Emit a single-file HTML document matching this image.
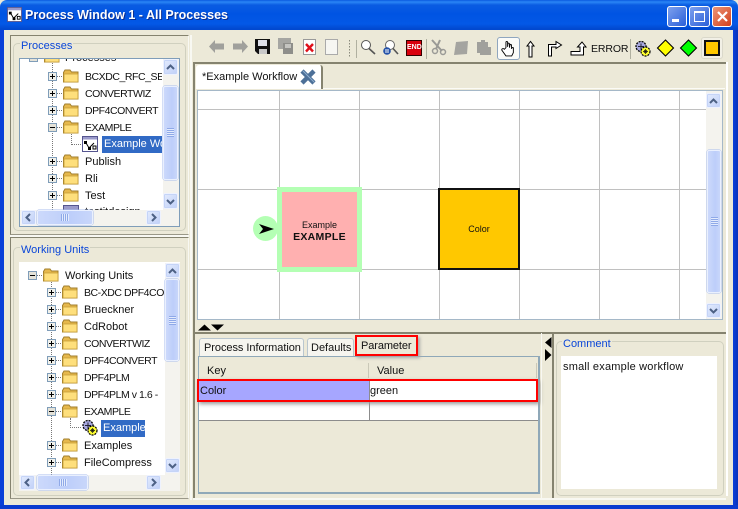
<!DOCTYPE html>
<html><head><meta charset="utf-8"><style>
html,body{margin:0;padding:0}
body{width:738px;height:509px;overflow:hidden;position:relative;background:#ece9d8;font:11px "Liberation Sans",sans-serif;color:#111}
div,svg{position:absolute;box-sizing:border-box}
svg,symbol{overflow:visible}
.t{white-space:nowrap;line-height:14px;margin-top:1px}
.u{font-size:10.5px;letter-spacing:-.45px}
.sbtn{background:linear-gradient(135deg,#e3ebfd,#c0d0f8);border:1px solid #eef2fe;border-radius:2px;box-shadow:inset 0 0 0 1px #c5d4f7}
.thumb{background:linear-gradient(90deg,#ccd9fb,#bdcefa 60%,#c8d6fa);border:1px solid #eaf0fe;border-radius:2px;box-shadow:0 0 0 .5px #a8bdec}
.track{background:#f4f3ee}
.grip{background:repeating-linear-gradient(#8fa9e8 0 1px,#e3ebfd 1px 2px)}
.gl{background:#c0c0c0}
.grp{border:1px solid #d0d0bf;border-radius:5px}
.lbl{color:#0a46d8;background:#ece9d8;padding:0 1px}
</style></head><body>
<svg width="0" height="0" style="position:absolute">
<defs>
<symbol id="f" viewBox="0 0 16 14"><path d="M.5 3.500 2 1H7L8.500 3H15V13H.5Z" fill="#e6b84c" stroke="#a07e2c" stroke-width="1"/><path d="M1 5H15V13H1Z" fill="#fedf7c" stroke="#c39a35" stroke-width=".8"/></symbol>
<symbol id="p" viewBox="0 0 9 9"><path d="M9 4.500H15" stroke="#777" stroke-dasharray="1 1"/><rect x=".5" y=".5" width="8" height="8" fill="#f0f0ea" stroke="#7f9db9"/><path d="M2 4.500H7M4.500 2V7" stroke="#000"/></symbol>
<symbol id="m" viewBox="0 0 9 9"><path d="M9 4.500H15" stroke="#777" stroke-dasharray="1 1"/><rect x=".5" y=".5" width="8" height="8" fill="#e4e2d8" stroke="#7f9db9"/><path d="M2 4.500H7" stroke="#000"/></symbol>
<symbol id="gear" viewBox="0 0 17 17"><circle cx="7" cy="6.500" r="5" fill="#a8a8e0" stroke="#000" stroke-width="1.300" stroke-dasharray="2 1"/><path d="M4 6.500H10M7 3.500V9.500" stroke="#223"/><circle cx="11.500" cy="11.500" r="4.500" fill="#ffff30" stroke="#000" stroke-width="1.200" stroke-dasharray="2 1"/><path d="M9 11.500H14M11.500 9V14M10 10L13 13M13 10L10 13" stroke="#111" stroke-width=".7"/></symbol>
<symbol id="wf" viewBox="0 0 16 16"><rect x=".5" y=".5" width="15" height="15" fill="#fff" stroke="#55558f"/><rect x="1" y="1" width="14" height="2.500" fill="#9a9acb"/><path d="M3.500 6 7 12 12 7" fill="none" stroke="#000"/><rect x="2" y="5" width="3" height="3"/><rect x="6" y="11" width="3" height="3"/><rect x="11" y="10" width="3" height="3" fill="none" stroke="#000"/></symbol>
<symbol id="up" viewBox="0 0 9 6"><path d="M1 5 4.500 1.500 8 5" fill="none" stroke="#4d6185" stroke-width="2"/></symbol>
<symbol id="dn" viewBox="0 0 9 6"><path d="M1 1 4.500 4.500 8 1" fill="none" stroke="#4d6185" stroke-width="2"/></symbol>
<symbol id="lf" viewBox="0 0 6 9"><path d="M5 1 1.500 4.500 5 8" fill="none" stroke="#4d6185" stroke-width="2"/></symbol>
<symbol id="rt" viewBox="0 0 6 9"><path d="M1 1 4.500 4.500 1 8" fill="none" stroke="#4d6185" stroke-width="2"/></symbol>
</defs></svg>

<!-- window frame -->
<div style="left:0;top:0;width:738px;height:30px;background:linear-gradient(#0a5ae0 0,#2a86f5 2px,#0a5ce2 5px,#0054e3 14px,#0358e6 24px,#0148cf 29px);border-radius:7px 7px 0 0"></div>
<div style="left:0;top:30px;width:4px;height:479px;background:#0a3fd8"></div>
<div style="left:733px;top:30px;width:5px;height:479px;background:linear-gradient(90deg,#0a40dc,#0a32b8)"></div>
<div style="left:0;top:505px;width:738px;height:4px;background:#0a3bcf"></div>
<div style="left:726px;top:62px;width:2px;height:434px;background:#fff"></div>

<!-- title -->
<svg style="left:7px;top:7px" width="15" height="15" viewBox="0 0 16 16"><use href="#wf"/></svg>
<div style="left:25px;top:8px;color:#fff;font-weight:bold;font-size:12.5px;line-height:15px;white-space:nowrap;text-shadow:1px 1px 0 #0a2d8f">Process Window 1 - All Processes</div>
<div style="left:667px;top:6px;width:20px;height:21px;background:linear-gradient(135deg,#7ea1ee,#2b5fd8);border:1px solid #fff;border-radius:3px"><div style="left:4px;top:12px;width:7px;height:3px;background:#fff"></div></div>
<div style="left:689px;top:6px;width:21px;height:21px;background:linear-gradient(135deg,#7ea1ee,#2b5fd8);border:1px solid #fff;border-radius:3px"><div style="left:4px;top:4px;width:11px;height:11px;border:1px solid #fff;border-top-width:2px"></div></div>
<div style="left:712px;top:6px;width:20px;height:21px;background:linear-gradient(135deg,#ec9577,#d2401c);border:1px solid #fff;border-radius:3px"><svg style="left:3px;top:3px" width="13" height="13"><path d="M2 2 11 11M11 2 2 11" stroke="#fff" stroke-width="2.200"/></svg></div>

<!-- left panel 1 -->
<div style="left:10px;top:35px;width:179px;height:200px;border:1px solid #85836f;border-right-color:#f8f8f2;border-bottom-color:#9a9888"></div>
<div class="grp" style="left:13px;top:43px;width:173px;height:188px"></div>
<div class="lbl t" style="left:20px;top:38px">Processes</div>
<div style="left:19px;top:58px;width:161px;height:169px;background:#fff;border:1px solid #7f9db9"></div>
<div style="left:52px;top:59px;width:1px;height:151px;border-left:1px dotted #777"></div>
<!-- clipped root row -->
<div style="left:20px;top:59px;width:143px;height:6px;overflow:hidden">
 <div class="t" style="left:45px;top:-9px">Processes</div>
 <svg style="left:24px;top:-10px" width="16" height="14"><use href="#f"/></svg>
 <svg style="left:9px;top:-6px" width="9" height="9"><use href="#m"/></svg>
</div>

<!-- processes tree rows -->
<svg style="left:48px;top:72px" width="9" height="9"><use href="#p"/></svg><svg style="left:63px;top:69px" width="16" height="14"><use href="#f"/></svg><div class="t u" style="left:85px;top:69px;width:77px;overflow:hidden">BCXDC_RFC_SE</div>
<svg style="left:48px;top:89px" width="9" height="9"><use href="#p"/></svg><svg style="left:63px;top:86px" width="16" height="14"><use href="#f"/></svg><div class="t u" style="left:85px;top:86px">CONVERTWIZ</div>
<svg style="left:48px;top:106px" width="9" height="9"><use href="#p"/></svg><svg style="left:63px;top:103px" width="16" height="14"><use href="#f"/></svg><div class="t u" style="left:85px;top:103px">DPF4CONVERT</div>
<svg style="left:48px;top:123px" width="9" height="9"><use href="#m"/></svg><svg style="left:63px;top:120px" width="16" height="14"><use href="#f"/></svg><div class="t u" style="left:85px;top:120px">EXAMPLE</div>
<svg style="left:82px;top:136px" width="16" height="16"><use href="#wf"/></svg>
<div style="left:71px;top:134px;width:10px;height:11px;border-left:1px dotted #777;border-bottom:1px dotted #777"></div>
<div class="t" style="left:102px;top:136px;width:60px;height:17px;margin:0;background:#316ac5;color:#fff;padding:1px 0 0 2px;overflow:hidden">Example Wo</div>
<svg style="left:48px;top:157px" width="9" height="9"><use href="#p"/></svg><svg style="left:63px;top:154px" width="16" height="14"><use href="#f"/></svg><div class="t" style="left:85px;top:154px">Publish</div>
<svg style="left:48px;top:174px" width="9" height="9"><use href="#p"/></svg><svg style="left:63px;top:171px" width="16" height="14"><use href="#f"/></svg><div class="t" style="left:85px;top:171px">Rli</div>
<svg style="left:48px;top:191px" width="9" height="9"><use href="#p"/></svg><svg style="left:63px;top:188px" width="16" height="14"><use href="#f"/></svg><div class="t" style="left:85px;top:188px">Test</div>
<div style="left:63px;top:205px;width:16px;height:5px;background:#9a9acb;border:1px solid #55558f;border-bottom:0"></div>
<div class="t" style="left:85px;top:204px;height:6px;overflow:hidden">testitdesign</div>
<!-- scrollbars -->
<div class="track" style="left:163px;top:59px;width:16px;height:151px"></div>
<div class="sbtn" style="left:163px;top:59px;width:15px;height:16px"><svg style="left:2px;top:4px" width="9" height="6"><use href="#up"/></svg></div>
<div class="thumb" style="left:163px;top:86px;width:15px;height:94px"><div class="grip" style="left:3px;top:41px;width:7px;height:9px"></div></div>
<div class="sbtn" style="left:163px;top:193px;width:15px;height:16px"><svg style="left:2px;top:5px" width="9" height="6"><use href="#dn"/></svg></div>
<div class="track" style="left:20px;top:210px;width:159px;height:16px"></div>
<div class="sbtn" style="left:21px;top:210px;width:15px;height:15px"><svg style="left:3px;top:2px" width="6" height="9"><use href="#lf"/></svg></div>
<div class="thumb" style="left:37px;top:210px;width:56px;height:15px"><div style="left:23px;top:3px;width:8px;height:7px;background:repeating-linear-gradient(90deg,#8fa9e8 0 1px,#e3ebfd 1px 2px)"></div></div>
<div class="sbtn" style="left:146px;top:210px;width:15px;height:15px"><svg style="left:4px;top:2px" width="6" height="9"><use href="#rt"/></svg></div>

<!-- left panel 2 -->
<div style="left:10px;top:235px;width:179px;height:3px;background:#f8f8f2"></div>
<div style="left:10px;top:237px;width:179px;height:262px;border:1px solid #85836f;border-right-color:#f8f8f2;border-bottom-color:#9a9888"></div>
<div class="grp" style="left:13px;top:247px;width:173px;height:249px"></div>
<div class="lbl t" style="left:20px;top:242px">Working Units</div>
<div style="left:19px;top:262px;width:161px;height:229px;background:#fff"></div>
<div style="left:51px;top:280px;width:1px;height:195px;border-left:1px dotted #777"></div>
<svg style="left:28px;top:271px" width="9" height="9"><use href="#m"/></svg><svg style="left:43px;top:268px" width="16" height="14"><use href="#f"/></svg><div class="t" style="left:65px;top:268px">Working Units</div>
<svg style="left:47px;top:288px" width="9" height="9"><use href="#p"/></svg><svg style="left:62px;top:285px" width="16" height="14"><use href="#f"/></svg><div class="t u" style="left:84px;top:285px;width:80px;overflow:hidden">BC-XDC DPF4CO</div>
<svg style="left:47px;top:305px" width="9" height="9"><use href="#p"/></svg><svg style="left:62px;top:302px" width="16" height="14"><use href="#f"/></svg><div class="t" style="left:84px;top:302px">Brueckner</div>
<svg style="left:47px;top:322px" width="9" height="9"><use href="#p"/></svg><svg style="left:62px;top:319px" width="16" height="14"><use href="#f"/></svg><div class="t" style="left:84px;top:319px">CdRobot</div>
<svg style="left:47px;top:339px" width="9" height="9"><use href="#p"/></svg><svg style="left:62px;top:336px" width="16" height="14"><use href="#f"/></svg><div class="t u" style="left:84px;top:336px">CONVERTWIZ</div>
<svg style="left:47px;top:356px" width="9" height="9"><use href="#p"/></svg><svg style="left:62px;top:353px" width="16" height="14"><use href="#f"/></svg><div class="t u" style="left:84px;top:353px">DPF4CONVERT</div>
<svg style="left:47px;top:373px" width="9" height="9"><use href="#p"/></svg><svg style="left:62px;top:370px" width="16" height="14"><use href="#f"/></svg><div class="t u" style="left:84px;top:370px">DPF4PLM</div>
<svg style="left:47px;top:390px" width="9" height="9"><use href="#p"/></svg><svg style="left:62px;top:387px" width="16" height="14"><use href="#f"/></svg><div class="t u" style="left:84px;top:387px;width:80px;overflow:hidden">DPF4PLM v 1.6 -</div>
<svg style="left:47px;top:407px" width="9" height="9"><use href="#m"/></svg><svg style="left:62px;top:404px" width="16" height="14"><use href="#f"/></svg><div class="t u" style="left:84px;top:404px">EXAMPLE</div>
<div style="left:70px;top:418px;width:11px;height:10px;border-left:1px dotted #777;border-bottom:1px dotted #777"></div>
<svg style="left:81px;top:419px" width="17" height="17"><use href="#gear"/></svg>
<div class="t" style="left:101px;top:420px;width:44px;height:17px;margin:0;background:#316ac5;color:#fff;padding:1px 0 0 2px;overflow:hidden">Example</div>
<svg style="left:47px;top:441px" width="9" height="9"><use href="#p"/></svg><svg style="left:62px;top:438px" width="16" height="14"><use href="#f"/></svg><div class="t" style="left:84px;top:438px">Examples</div>
<svg style="left:47px;top:458px" width="9" height="9"><use href="#p"/></svg><svg style="left:62px;top:455px" width="16" height="14"><use href="#f"/></svg><div class="t" style="left:84px;top:455px">FileCompress</div>
<div class="track" style="left:165px;top:263px;width:15px;height:212px"></div>
<div class="sbtn" style="left:165px;top:263px;width:15px;height:15px"><svg style="left:2px;top:4px" width="9" height="6"><use href="#up"/></svg></div>
<div class="thumb" style="left:165px;top:279px;width:14px;height:82px"><div class="grip" style="left:3px;top:36px;width:7px;height:9px"></div></div>
<div class="sbtn" style="left:165px;top:458px;width:15px;height:15px"><svg style="left:2px;top:4px" width="9" height="6"><use href="#dn"/></svg></div>
<div class="track" style="left:19px;top:475px;width:161px;height:16px"></div>
<div class="sbtn" style="left:20px;top:475px;width:15px;height:15px"><svg style="left:3px;top:2px" width="6" height="9"><use href="#lf"/></svg></div>
<div class="thumb" style="left:37px;top:475px;width:51px;height:15px"><div style="left:21px;top:3px;width:8px;height:7px;background:repeating-linear-gradient(90deg,#8fa9e8 0 1px,#e3ebfd 1px 2px)"></div></div>
<div class="sbtn" style="left:146px;top:475px;width:15px;height:15px"><svg style="left:4px;top:2px" width="6" height="9"><use href="#rt"/></svg></div>

<!-- separator -->
<div style="left:190px;top:35px;width:2px;height:465px;background:#f8f8f2"></div>
<div style="left:193px;top:62px;width:533px;height:2px;background:#85836f"></div>
<div style="left:193px;top:62px;width:2px;height:436px;background:#85836f"></div>
<div style="left:722px;top:88px;width:2px;height:234px;background:#85836f"></div>

<!-- toolbar -->
<svg style="left:200px;top:34px" width="170" height="27" viewBox="0 0 170 27">
<path d="M15 6 9 12.500 15 19V15.500H24V9.500H15Z" fill="#a0a09c"/>
<path d="M42 6 48 12.500 42 19V15.500H33V9.500H42Z" fill="#a0a09c"/>
<path d="M55 5H70V20H58L55 17Z" fill="#111"/><rect x="58" y="6" width="9" height="6" fill="#dfe1ea"/><rect x="59" y="15" width="8" height="5" fill="#c8c8c8"/>
<path d="M78 4H91V15H78Z" fill="#a6a6a2"/><path d="M83 9H93V20H83Z" fill="#8e8e8a"/><rect x="85" y="10" width="6" height="4" fill="#c4c4c0"/>
<rect x="103.500" y="5.500" width="12" height="15" fill="#fff" stroke="#999"/><path d="M106 10 113 17.500M113 10 106 17.500" stroke="#e0101a" stroke-width="2.400"/>
<rect x="125.500" y="5.500" width="12" height="15" fill="#f6f6f2" stroke="#aaa"/>
<path d="M149.500 6V24" stroke="#8a8a7c" stroke-dasharray="1.500 1.500"/>
<path d="M156.500 6V24" stroke="#b0b0a0"/>
</svg>
<svg style="left:358px;top:36px" width="46" height="25" viewBox="0 0 46 25">
<circle cx="8" cy="9" r="4.500" fill="#fff" stroke="#555"/><path d="M11 12.500 17 18" stroke="#555" stroke-width="1.600"/>
<circle cx="32" cy="9" r="4.500" fill="#fff" stroke="#666"/><path d="M35 12.500 40 18" stroke="#555" stroke-width="1.600"/><circle cx="29" cy="15" r="3.800" fill="#2250a8"/><path d="M28 13V17M30 13V17" stroke="#fff"/>
</svg>
<div style="left:406px;top:40px;width:16px;height:16px;background:#d9000d;border:1px solid #300;color:#fff;font:bold 7px/14px 'Liberation Sans',sans-serif;text-align:center;letter-spacing:0">END</div>
<div style="left:426px;top:39px;width:1px;height:20px;background:#b0b0a0"></div>
<svg style="left:430px;top:38px" width="66" height="22" viewBox="0 0 66 22">
<path d="M2 2 12 13M10 2 6 11" stroke="#9a9a96" stroke-width="2" fill="none"/><circle cx="13" cy="14" r="2.500" fill="none" stroke="#9a9a96" stroke-width="1.500"/><circle cx="5" cy="13" r="2.500" fill="none" stroke="#9a9a96" stroke-width="1.500"/>
<path d="M26 4 38 3 37 16 24 17Z" fill="#a4a4a0"/>
<path d="M47 4H51V2H55V4H58V9H61V17H50V15H47Z" fill="#a0a09c"/>
</svg>
<div style="left:497px;top:37px;width:23px;height:23px;background:#fbfbf8;border:1px solid #8fa6bf;border-radius:3px"></div>
<svg style="left:501px;top:40px" width="14" height="17" viewBox="0 0 17 20"><path d="M6 9V2.500C6 1 8 1 8 2.500V8L8.500 4C9 3 10.300 3.500 10.300 4.500V9L11 5.500C11.500 4.500 12.800 5 12.800 6V10.500C13.500 8 15.500 8.500 15 10V15L13 19H6L1 12C.5 10 3 9.500 4 11Z" fill="#fff" stroke="#000" stroke-width="1.100"/></svg>
<svg style="left:524px;top:39px" width="64" height="21" viewBox="0 0 64 21">
<path d="M3 7 6.500 2.500 10 7H8V18H5V7Z" fill="#fff" stroke="#000"/>
<path d="M24.500 17V5.500H32V2.500L37.500 6 32 9.500V8H27.500V17Z" fill="#fff" stroke="#000"/>
<path d="M47 16V12.500H56V8H53.500L58 3 62 8H59.500V16Z" fill="#fff" stroke="#000"/>
</svg>
<div class="t" style="left:591px;top:41px;font-size:10.5px;letter-spacing:-.1px">ERROR</div>
<div style="left:630px;top:39px;width:1px;height:20px;background:#b0b0a0"></div>
<svg style="left:634px;top:40px" width="17" height="17"><use href="#gear"/></svg>
<svg style="left:655px;top:38px" width="44" height="20" viewBox="0 0 44 20">
<path d="M10.500 2 18.500 10 10.500 18 2.500 10Z" fill="#ffff00" stroke="#000" stroke-width="1.100"/>
<path d="M33.500 2 41.500 10 33.500 18 25.500 10Z" fill="#00ff00" stroke="#000" stroke-width="1.100"/>
</svg>
<div style="left:701px;top:37px;width:22px;height:22px;background:#f2f0e6;border:1px solid #dad8ca;border-radius:3px"></div>
<div style="left:704px;top:40px;width:16px;height:16px;background:#ffc800;border:2px solid #111"></div>

<!-- tab -->
<div style="left:195px;top:64px;width:531px;height:25px;background:#ece9d8"></div>
<div style="left:323px;top:88px;width:402px;height:1px;background:#fbfbf6"></div>
<div style="left:196px;top:65px;width:127px;height:25px;background:#fff;border-right:2px solid #85836f;border-radius:3px 3px 0 0"></div>
<div class="t" style="left:202px;top:69px;color:#111">*Example Workflow</div>
<svg style="left:299px;top:68px" width="18" height="18" viewBox="0 0 18 18"><path d="M3 3 15 15M15 3 3 15" stroke="#4d7098" stroke-width="4.500"/><path d="M4 3 15 14" stroke="#8fb0d0" stroke-width="1"/></svg>

<!-- canvas -->
<div style="left:195px;top:89px;width:529px;height:233px;background:#ece9d8"></div>
<div style="left:197px;top:90px;width:526px;height:230px;background:#fff;border:1px solid #a5b8c8;overflow:hidden">
 <div class="gl" style="left:81px;top:0;width:1px;height:230px"></div>
 <div class="gl" style="left:161px;top:0;width:1px;height:230px"></div>
 <div class="gl" style="left:241px;top:0;width:1px;height:230px"></div>
 <div class="gl" style="left:321px;top:0;width:1px;height:230px"></div>
 <div class="gl" style="left:401px;top:0;width:1px;height:230px"></div>
 <div class="gl" style="left:481px;top:0;width:1px;height:230px"></div>
 <div class="gl" style="left:0;top:18px;width:526px;height:1px"></div>
 <div class="gl" style="left:0;top:98px;width:526px;height:1px"></div>
 <div class="gl" style="left:0;top:178px;width:526px;height:1px"></div>
</div>
<div class="track" style="left:706px;top:91px;width:16px;height:228px"></div>
<div class="sbtn" style="left:706px;top:93px;width:15px;height:15px"><svg style="left:2px;top:4px" width="9" height="6"><use href="#up"/></svg></div>
<div class="thumb" style="left:707px;top:150px;width:14px;height:143px"><div class="grip" style="left:3px;top:66px;width:7px;height:9px"></div></div>
<div class="sbtn" style="left:706px;top:303px;width:15px;height:15px"><svg style="left:2px;top:4px" width="9" height="6"><use href="#dn"/></svg></div>

<!-- nodes -->
<div style="left:253px;top:216px;width:25px;height:25px;border-radius:50%;background:#b4ffb4"></div>
<svg style="left:259px;top:224px" width="16" height="10" viewBox="0 0 16 10"><path d="M0 0 15 5 0 10 4 5Z" fill="#000"/></svg>
<div style="left:277px;top:187px;width:85px;height:85px;background:#ffb0b0;border:5px solid #b4ffb4"></div>
<div style="left:277px;top:220px;width:85px;text-align:center;font-size:9px;line-height:11px;color:#111">Example</div>
<div style="left:277px;top:231px;width:85px;text-align:center;font-size:10.5px;font-weight:bold;line-height:13px;letter-spacing:.3px;color:#111">EXAMPLE</div>
<div style="left:438px;top:188px;width:82px;height:82px;background:#ffc800;border:2px solid #111"></div>
<div style="left:438px;top:224px;width:82px;text-align:center;font-size:9px;line-height:11px;color:#111">Color</div>

<!-- split arrows -->
<svg style="left:198px;top:324px" width="26" height="7" viewBox="0 0 26 7"><path d="M0 6.500 6.500 .5 13 6.500ZM13 .5H26L19.500 6.500Z" fill="#000"/></svg>
<div style="left:195px;top:332px;width:531px;height:2px;background:#85836f"></div>

<!-- bottom tabs -->
<div style="left:199px;top:338px;width:105px;height:18px;background:#f6f5ef;border:1px solid #b9c6cf;border-bottom:0;border-radius:3px 3px 0 0"></div>
<div class="t" style="left:204px;top:340px;letter-spacing:-.05px">Process Information</div>
<div style="left:307px;top:338px;width:47px;height:18px;background:#f6f5ef;border:1px solid #b9c6cf;border-bottom:0;border-radius:3px 3px 0 0"></div>
<div class="t" style="left:311px;top:340px">Defaults</div>
<div style="left:198px;top:356px;width:342px;height:138px;border:1px solid #8fa8b8;border-width:1px 2px 2px 1px"></div>
<div style="left:355px;top:335px;width:63px;height:21px;border:2px solid #f00;background:#ece9d8;box-shadow:2px 2px 3px #aaa"></div>
<div class="t" style="left:361px;top:338px;letter-spacing:-.1px">Parameter</div>
<div class="t" style="left:207px;top:363px">Key</div>
<div class="t" style="left:377px;top:363px">Value</div>
<div style="left:368px;top:363px;width:1px;height:15px;background:#cac8b8"></div>
<div style="left:536px;top:363px;width:1px;height:15px;background:#cac8b8"></div>
<div style="left:199px;top:381px;width:171px;height:20px;background:#a6a6ff"></div>
<div style="left:370px;top:381px;width:168px;height:20px;background:#fff"></div>
<div style="left:199px;top:401px;width:339px;height:20px;background:#fff;border-bottom:1px solid #8c8c8c"></div>
<div style="left:369px;top:381px;width:1px;height:40px;background:#8c8c8c"></div>
<div style="left:197px;top:379px;width:341px;height:23px;border:2px solid #f00;box-shadow:2px 2px 4px #999"></div>
<div class="t" style="left:200px;top:383px">Color</div>
<div class="t" style="left:370px;top:383px">green</div>

<!-- side splitter -->
<svg style="left:544px;top:337px" width="8" height="24" viewBox="0 0 8 24"><path d="M7.500 0V11L1 5.500ZM1 12V24L7.500 18Z" fill="#000"/></svg>
<div style="left:552px;top:333px;width:2px;height:166px;background:#85836f"></div>
<div style="left:541px;top:333px;width:1px;height:165px;background:#f8f8f2"></div>
<div style="left:193px;top:498px;width:533px;height:2px;background:#f8f8f2"></div>

<!-- comment -->
<div class="grp" style="left:556px;top:341px;width:168px;height:155px"></div>
<div class="lbl t" style="left:562px;top:336px">Comment</div>
<div style="left:561px;top:356px;width:156px;height:133px;background:#fff"></div>
<div class="t" style="left:563px;top:359px;letter-spacing:.2px">small example workflow</div>
</body></html>
